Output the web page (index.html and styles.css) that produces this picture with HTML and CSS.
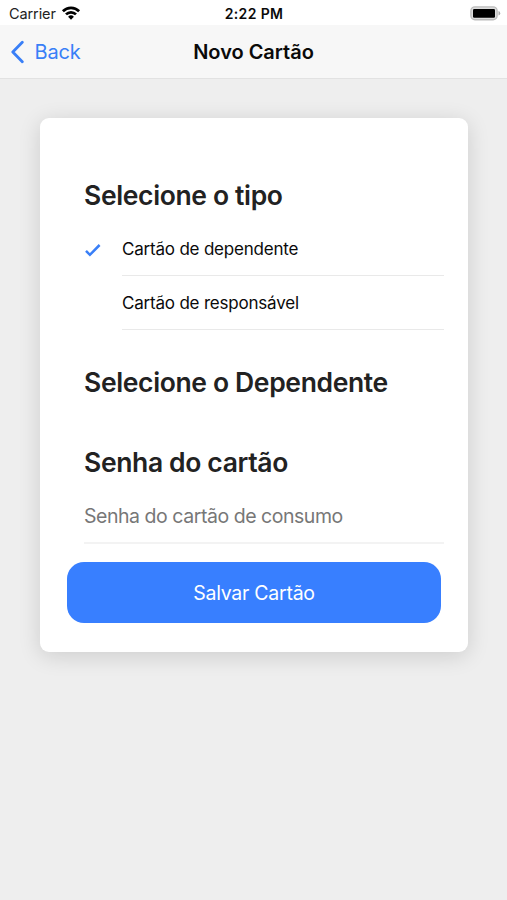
FILE: index.html
```html
<!DOCTYPE html>
<html lang="pt-BR">
<head>
<meta charset="utf-8">
<title>Novo Cartão</title>
<link rel="stylesheet" href="styles.css">
</head>
<body>
<div class="status">
  <div class="status-left"><span class="carrier">Carrier</span>
    <svg class="wifi" width="20" height="16" viewBox="0 0 20 16"><g fill="none" stroke="#000" stroke-width="2.7"><path d="M1.9 6.2a11.4 11.4 0 0 1 16.2 0"/><path d="M5 9.4a7 7 0 0 1 10 0"/></g><path d="M10 14.8l-2.9-3.1a4.2 4.2 0 0 1 5.8 0z"/></svg>
  </div>
  <span class="time">2:22 PM</span>
  <svg class="battery" width="31" height="15" viewBox="0 0 31 15"><rect x=".9" y=".9" width="26.2" height="12.8" rx="4" fill="#ddd" stroke="#bcbcbc" stroke-width="1.4"/><rect x="3" y="3" width="22" height="8.8" rx="1.2"/><path d="M28.5 5a2.4 2.4 0 0 1 0 4.6z" fill="#aaa"/></svg>
</div>
<header class="nav">
  <a class="back"><svg width="14" height="24" viewBox="0 0 14 24"><path d="M12.3 2.2L2.8 12l9.5 9.8" fill="none" stroke="#397ff7" stroke-width="2.8" stroke-linecap="round" stroke-linejoin="round"/></svg><span>Back</span></a>
  <h1 class="title"><span>Novo Cartão</span></h1>
</header>
<main class="card">
  <h2 class="h-type"><span>Selecione o tipo</span></h2>
  <ul class="options">
    <li class="option"><svg class="check" width="17" height="14" viewBox="0 0 17 14"><path d="M2 7.9l3.9 3.9L15.6 2" fill="none" stroke="#397ff7" stroke-width="2.5"/></svg><span class="label dep">Cartão de dependente</span></li>
    <li class="option"><span class="label resp">Cartão de responsável</span></li>
  </ul>
  <h2 class="h-dep"><span>Selecione o Dependente</span></h2>
  <h2 class="h-pass"><span>Senha do cartão</span></h2>
  <div class="field"><span>Senha do cartão de consumo</span></div>
  <button class="save"><span>Salvar Cartão</span></button>
</main>
</body>
</html>
```
FILE: styles.css
```css
* { box-sizing: border-box; }
body { margin: 0; min-height: 900px; background: #eee; font-family: Inter, "Liberation Sans", sans-serif; color: #0a0a0a; white-space: nowrap; }
.status { height: 25px; background: #fff; display: grid; grid-template-columns: 1fr auto 1fr; align-items: center; padding: 1px 6px 0 9px; }
.status-left { display: flex; align-items: center; gap: 5px; }
.carrier { font-size: 14.5px; letter-spacing: -.1px; color: #222; line-height: 26px; }
.wifi { margin-top: -3px; }
.time { font-size: 14px; font-weight: 600; letter-spacing: .35px; line-height: 26px; margin-left: -2px; }
.battery { justify-self: end; margin-top: -2px; }
.nav { height: 54px; background: #f7f7f7; border-bottom: 1px solid #e2e2e2; display: grid; grid-template-columns: 1fr auto 1fr; align-items: center; padding: 0 10px; }
.back { display: flex; align-items: center; gap: 11px; color: #397ff7; font-size: 20px; letter-spacing: -.2px; }
.back svg { margin-left: -.5px; }
.title { margin: 0; font-size: 20px; font-weight: 600; letter-spacing: -.03px; }
.card { width: 428px; height: 534px; margin: 39px 0 0 40px; background: #fff; border-radius: 9px; padding: 59px 24px 0 44px; box-shadow: 0 4px 22px rgba(0,0,0,.14); }
h2 { margin: 0; font-size: 26.5px; line-height: 36px; font-weight: 600; letter-spacing: -.36px; color: #222; }
.options { list-style: none; margin: 9px 0 0; padding: 0 0 0 38px; }
.option { height: 54px; border-bottom: 1px solid #e9e9e9; display: flex; align-items: center; font-size: 17px; letter-spacing: -.2px; }
.check { margin: 3px 0 0 -38px; }
.check + .label { margin-left: 21px; }
.h-dep { margin-top: 34px; }
.h-pass { margin-top: 44px; }
.field { height: 64px; border-bottom: 2px solid #f3f3f3; display: flex; align-items: center; padding-top: 10px; font-size: 19.5px; letter-spacing: -.46px; color: #777; }
.save { display: block; width: 374px; height: 61px; margin: 18px 0 0 -17px; padding: 0; border: 0; border-radius: 17px; background: #387fff; color: #fff; font: 400 19.5px Inter, "Liberation Sans", sans-serif; letter-spacing: -.25px; }
```
